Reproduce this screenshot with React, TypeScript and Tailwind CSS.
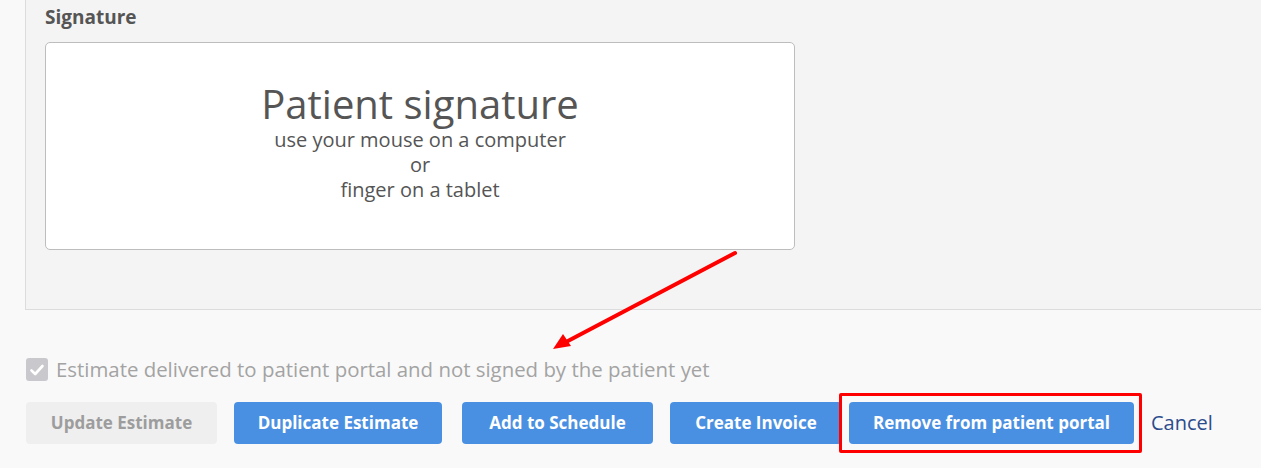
import React from 'react';

function Check() {
  return (
    <div className="w-[22px] h-[23px] rounded-[3px] bg-[#c9c9cd] flex items-center justify-center">
      <svg width="16" height="16" viewBox="0 0 16 16" fill="none">
        <path d="M2.5 8.5 L6.2 12 L13.5 4" stroke="white" strokeWidth="2.6" strokeLinecap="round" strokeLinejoin="round" />
      </svg>
    </div>
  );
}

export default function App() {
  return (
    <div className="relative w-[1261px] h-[468px] overflow-hidden bg-[#f9f9f9] font-['Open_Sans',sans-serif]">
      <div className="ml-[25px] h-[310px] border-l border-b border-[#dcdcdc] bg-[#f4f4f4] pl-[19px] pt-[5px]">
        <div className="text-[19px] leading-[24px] font-bold text-[#555]">Signature</div>
        <div className="mt-[13px] w-[750px] h-[208px] rounded-[5px] border border-[#bdbdbd] bg-white flex flex-col items-center pt-[38px] text-[#555]">
          <div className="text-[40px] leading-[46px]">Patient signature</div>
          <div className="text-[20px] leading-[25px] text-center">
            <div>use your mouse on a computer</div>
            <div>or</div>
            <div>finger on a tablet</div>
          </div>
        </div>
      </div>

      <div className="ml-[26px] mt-[48px] flex items-center gap-[8px]">
        <Check />
        <span className="text-[20.4px] leading-[23px] text-[#a3a3a3]">Estimate delivered to patient portal and not signed by the patient yet</span>
      </div>

      <div className="ml-[26px] mt-[21px] flex items-center">
        <button className="w-[191px] h-[42px] rounded-[4px] bg-[#efefef] text-[#9d9d9d] text-[17px] font-bold">Update Estimate</button>
        <button className="ml-[17px] w-[208px] h-[42px] rounded-[4px] bg-[#4a90e2] text-white text-[17px] font-bold">Duplicate Estimate</button>
        <button className="ml-[20px] w-[191px] h-[42px] rounded-[4px] bg-[#4a90e2] text-white text-[17px] font-bold">Add to Schedule</button>
        <button className="ml-[17px] w-[172px] h-[42px] rounded-[4px] bg-[#4a90e2] text-white text-[17px] font-bold">Create Invoice</button>
        <button className="ml-[7px] w-[285px] h-[42px] rounded-[4px] bg-[#4a90e2] text-white text-[17px] font-bold">Remove from patient portal</button>
        <span className="ml-[17px] text-[20px] text-[#2b4c8c]">Cancel</span>
      </div>

      {/* annotation overlays */}
      <div className="absolute left-[839px] top-[393px] w-[303px] h-[60px] border-[3px] border-[#ff0000] rounded-[2px] pointer-events-none" />
      <svg className="absolute left-0 top-0 pointer-events-none" width="1261" height="468">
        <line x1="735" y1="253" x2="566" y2="342" stroke="#ff0000" strokeWidth="4" strokeLinecap="round" />
        <polygon points="553,349 563,334 571,346" fill="#ff0000" />
      </svg>
    </div>
  );
}
